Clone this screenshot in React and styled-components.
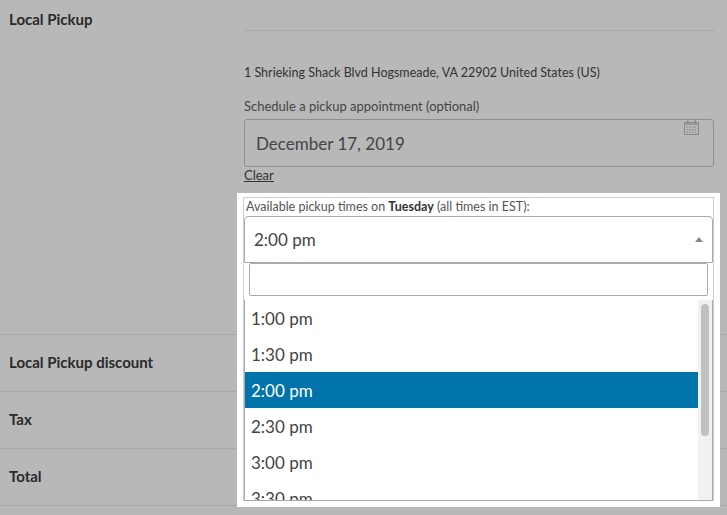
import React from 'react';
import styled, { createGlobalStyle } from 'styled-components';

const Global = createGlobalStyle`
  body { margin: 0; background: #b8b8b8; font-family: Lato, "Open Sans", sans-serif; color: #333; }
`;

const Page = styled.div`
  width: 727px;
  height: 515px;
  overflow: hidden;
`;

const Row = styled.div`
  display: grid;
  grid-template-columns: 237px 1fr;
  height: ${p => p.$h}px;
  border-bottom: 1px solid #a9a9a9;
  box-sizing: border-box;
`;

const Label = styled.div`
  font-weight: 700;
  font-size: 15px;
  color: #2a2a2a;
  padding: ${p => p.$top}px 0 0 9px;
`;

const Cell = styled.div`
  position: relative;
  padding: 0 13px 0 7px;
`;

const Rule = styled.div`
  height: 1px;
  background: #a9a9a9;
  margin-top: 30px;
`;

const Address = styled.div`
  font-size: 12.5px;
  margin-top: 34px;
  color: #333;
`;

const Small = styled.div`
  font-size: 13px;
  color: #444;
  margin-top: 18px;
`;

const DateBox = styled.div`
  margin-top: 5px;
  height: 46px;
  border: 1px solid #8f8f8f;
  border-radius: 3px;
  display: flex;
  align-items: center;
  padding: 0 11px;
  font-size: 17px;
  color: #444;
  position: relative;
`;

const Cal = styled.svg`
  position: absolute;
  right: 14px;
  top: 0;
`;

const Clear = styled.div`
  font-size: 13px;
  text-decoration: underline;
  margin-top: 0;
`;

const Drop = styled.div`
  position: absolute;
  left: 0;
  top: 193px;
  width: 483px;
  height: 314px;
  background: #fff;
  padding: 4px 6px 6px 6px;
  box-sizing: border-box;
  z-index: 2;
`;

const Inner = styled.div`
  border: 1px solid #cfcfcf;
  border-bottom: none;
  height: 100%;
  box-sizing: border-box;
  display: flex;
  flex-direction: column;
`;

const DropLabel = styled.div`
  font-size: 12.5px;
  color: #555;
  padding: 1px 2px 2px;
  b { color: #333; }
`;

const Select = styled.div`
  height: 47px;
  border: 1px solid #aaa;
  border-radius: 4px 4px 0 0;
  display: flex;
  flex-direction: column;
  box-sizing: border-box;
  flex: none;
`;

const Current = styled.div`
  display: flex;
  align-items: center;
  justify-content: space-between;
  padding: 0 9px;
  height: 46px;
  font-size: 17px;
  color: #444;
`;

const Arrow = styled.span`
  width: 0;
  height: 0;
  border-left: 4px solid transparent;
  border-right: 4px solid transparent;
  border-bottom: 5px solid #888;
`;

const Search = styled.div`
  margin: 0 5px;
  height: 33px;
  border: 1px solid #aaa;
  border-radius: 2px;
  box-sizing: border-box;
  flex: none;
`;

const ListWrap = styled.div`
  flex: 1;
  display: flex;
  border: 1px solid #aaa;
  border-top: none;
  margin-top: 4px;
  overflow: hidden;
`;

const List = styled.div`
  flex: 1;
`;

const Item = styled.div`
  height: 36px;
  display: flex;
  align-items: center;
  padding-left: 6px;
  font-size: 17px;
  background: ${p => (p.$sel ? '#0073aa' : 'transparent')};
  color: ${p => (p.$sel ? '#fff' : '#444')};
`;

const Track = styled.div`
  width: 14px;
  background: #f1f1f1;
  padding: 4px 3px;
  box-sizing: border-box;
`;

const Thumb = styled.div`
  height: 132px;
  background: #c1c1c1;
  border-radius: 4px;
`;

const times = ['1:00 pm', '1:30 pm', '2:00 pm', '2:30 pm', '3:00 pm', '3:30 pm'];

export default function App() {
  return (
    <Page>
      <Global />
      <Row $h={335}>
        <Label $top={10}>Local Pickup</Label>
        <Cell>
          <Rule />
          <Address>1 Shrieking Shack Blvd Hogsmeade, VA 22902 United States (US)</Address>
          <Small>Schedule a pickup appointment (optional)</Small>
          <DateBox>
            December 17, 2019
            <Cal width="15" height="15" viewBox="0 0 15 15">
              <rect x="0.5" y="2.5" width="14" height="12" fill="none" stroke="#888" />
              <rect x="0.5" y="2.5" width="14" height="2.5" fill="#999" />
              <rect x="3" y="0.5" width="1.5" height="3" fill="#888" />
              <rect x="10.5" y="0.5" width="1.5" height="3" fill="#888" />
              {[0, 1, 2].map(r => [0, 1, 2, 3].map(c => (
                <rect key={`${r}${c}`} x={2.5 + c * 2.7} y={6.5 + r * 2.5} width="1.6" height="1.5" fill="#999" />
              )))}
            </Cal>
          </DateBox>
          <Clear>Clear</Clear>
          <Drop>
            <Inner>
              <DropLabel>Available pickup times on <b>Tuesday</b> (all times in EST):</DropLabel>
              <Select>
                <Current>2:00 pm<Arrow /></Current>
              </Select>
              <Search />
              <ListWrap>
                <List>
                  {times.map(t => <Item key={t} $sel={t === '2:00 pm'}>{t}</Item>)}
                </List>
                <Track><Thumb /></Track>
              </ListWrap>
            </Inner>
          </Drop>
        </Cell>
      </Row>
      <Row $h={57}>
        <Label $top={18}>Local Pickup discount</Label>
        <Cell />
      </Row>
      <Row $h={57}>
        <Label $top={18}>Tax</Label>
        <Cell />
      </Row>
      <Row $h={57}>
        <Label $top={18}>Total</Label>
        <Cell />
      </Row>
    </Page>
  );
}
